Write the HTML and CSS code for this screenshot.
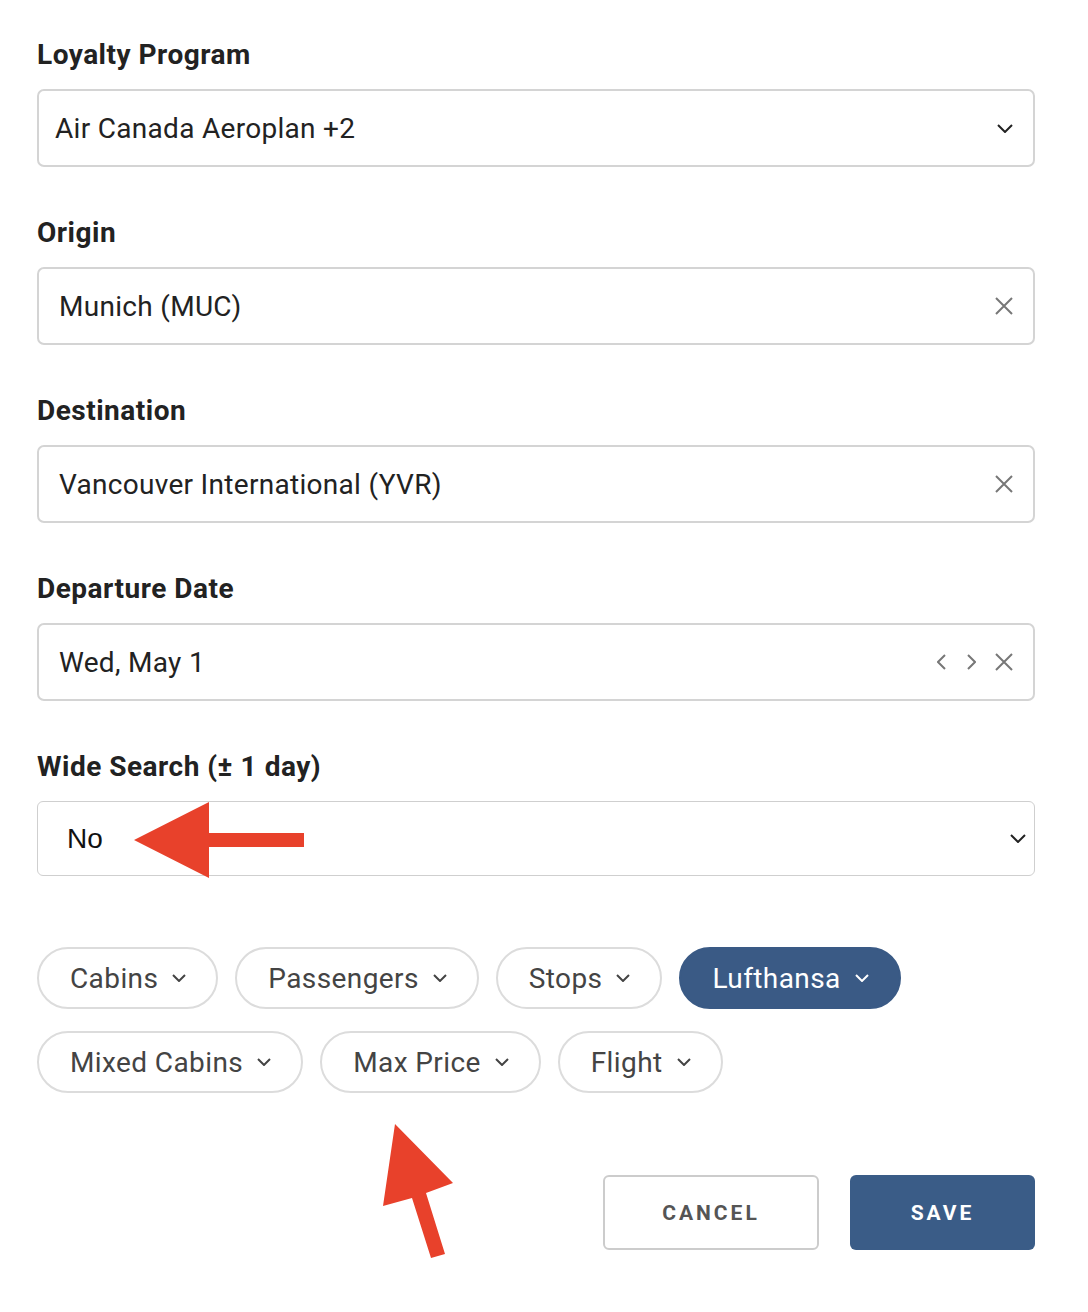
FILE: index.html
```html
<!DOCTYPE html>
<html lang="en">
<head>
<meta charset="utf-8">
<title>Search</title>
<link rel="stylesheet" href="styles.css">
</head>
<body>
<div class="form">
  <div class="field">
    <label class="label">Loyalty Program</label>
    <div class="input">
      <span class="value">Air Canada Aeroplan +2</span>
      <span class="icons">
        <svg class="chev-dark" width="16" height="9" viewBox="0 0 16 9"><polyline points="1,1 8,8 15,1" fill="none" stroke="#222" stroke-width="2"/></svg>
      </span>
    </div>
  </div>
  <div class="field">
    <label class="label">Origin</label>
    <div class="input">
      <span class="value v2">Munich (MUC)</span>
      <span class="icons">
        <svg width="18" height="18" viewBox="0 0 18 18"><path d="M1 1L17 17M17 1L1 17" stroke="#777" stroke-width="2"/></svg>
      </span>
    </div>
  </div>
  <div class="field">
    <label class="label">Destination</label>
    <div class="input">
      <span class="value v2">Vancouver International (YVR)</span>
      <span class="icons">
        <svg width="18" height="18" viewBox="0 0 18 18"><path d="M1 1L17 17M17 1L1 17" stroke="#777" stroke-width="2"/></svg>
      </span>
    </div>
  </div>
  <div class="field">
    <label class="label">Departure Date</label>
    <div class="input">
      <span class="value v2">Wed, May 1</span>
      <span class="icons date-icons">
        <svg width="10" height="16" viewBox="0 0 10 16"><polyline points="8,1 1,8 8,15" fill="none" stroke="#777" stroke-width="2"/></svg>
        <svg width="10" height="16" viewBox="0 0 10 16"><polyline points="2,1 9,8 2,15" fill="none" stroke="#777" stroke-width="2"/></svg>
        <svg width="18" height="18" viewBox="0 0 18 18"><path d="M1 1L17 17M17 1L1 17" stroke="#777" stroke-width="2"/></svg>
      </span>
    </div>
  </div>
  <div class="field">
    <label class="label">Wide Search (± 1 day)</label>
    <div class="select">
      <span class="select-value">No</span>
      <svg width="16" height="9" viewBox="0 0 16 9"><polyline points="1,1 8,8 15,1" fill="none" stroke="#222" stroke-width="2"/></svg>
      <svg class="arrow-left" width="174" height="78" viewBox="0 0 174 78"><polygon points="0,38 75,0 75,31 170,31 170,45 75,45 75,76" fill="#e8412b"/></svg>
    </div>
  </div>

  <div class="pills">
    <button class="pill">Cabins <svg width="14" height="8" viewBox="0 0 14 8"><polyline points="1,1 7,7 13,1" fill="none" stroke="currentColor" stroke-width="2"/></svg></button>
    <button class="pill">Passengers <svg width="14" height="8" viewBox="0 0 14 8"><polyline points="1,1 7,7 13,1" fill="none" stroke="currentColor" stroke-width="2"/></svg></button>
    <button class="pill">Stops <svg width="14" height="8" viewBox="0 0 14 8"><polyline points="1,1 7,7 13,1" fill="none" stroke="currentColor" stroke-width="2"/></svg></button>
    <button class="pill active">Lufthansa <svg width="14" height="8" viewBox="0 0 14 8"><polyline points="1,1 7,7 13,1" fill="none" stroke="currentColor" stroke-width="2"/></svg></button>
    <button class="pill">Mixed Cabins <svg width="14" height="8" viewBox="0 0 14 8"><polyline points="1,1 7,7 13,1" fill="none" stroke="currentColor" stroke-width="2"/></svg></button>
    <button class="pill">Max Price <svg width="14" height="8" viewBox="0 0 14 8"><polyline points="1,1 7,7 13,1" fill="none" stroke="currentColor" stroke-width="2"/></svg></button>
    <button class="pill">Flight <svg width="14" height="8" viewBox="0 0 14 8"><polyline points="1,1 7,7 13,1" fill="none" stroke="currentColor" stroke-width="2"/></svg></button>
  </div>

  <div class="actions">
    <svg class="arrow-up" width="80" height="140" viewBox="0 0 80 140"><polygon points="15,2 73,61 46,71 65,132 51,136 32,76 3,84" fill="#e8412b"/></svg>
    <button class="btn cancel">CANCEL</button>
    <button class="btn save">SAVE</button>
  </div>
</div>
</body>
</html>
```

FILE: styles.css
```css
* { box-sizing: border-box; }
html, body { margin: 0; padding: 0; background: #fff; }
body { font-family: Roboto, "Noto Sans", sans-serif; color: #222; }

.form {
  width: 1088px;
  padding: 37px 53px 40px 37px;
  display: flex;
  flex-direction: column;
}

.field {
  display: flex;
  flex-direction: column;
  gap: 16px;
  margin-bottom: 48px;
}
.field:nth-child(5) { margin-bottom: 0; }

.label {
  font-size: 28px;
  font-weight: 700;
  line-height: 36px;
  color: #222;
  letter-spacing: 0.5px;
}

.input {
  height: 78px;
  border: 2px solid #d4d4d4;
  border-radius: 7px;
  display: flex;
  align-items: center;
  justify-content: space-between;
  padding: 0 20px 0 16px;
}
.value {
  font-size: 28px;
  color: #222;
  letter-spacing: 0.3px;
}
.value.v2 { padding-left: 4px; }
.icons {
  display: flex;
  align-items: center;
  gap: 19px;
}

.select {
  position: relative;
  height: 75px;
  border: 1.5px solid #cfcfcf;
  border-radius: 6px;
  display: flex;
  align-items: center;
  justify-content: space-between;
  padding: 0 8px 0 29px;
}
.select-value {
  font-family: "Liberation Sans", Arial, sans-serif;
  font-size: 28px;
  color: #111;
}
.arrow-left {
  position: absolute;
  left: 96px;
  top: 0px;
}

.pills {
  display: flex;
  flex-wrap: wrap;
  gap: 22px 17px;
  margin-top: 71px;
  width: 900px;
}
.pill {
  height: 62px;
  border: 2px solid #dcdcdc;
  border-radius: 31px;
  background: #fff;
  color: #444;
  font-family: Roboto, "Noto Sans", sans-serif;
  font-size: 28px;
  letter-spacing: 0.4px;
  padding: 0 30px 0 31px;
  display: flex;
  align-items: center;
  gap: 14px;
}
.pill.active {
  background: #3a5a85;
  border-color: #3a5a85;
  color: #fff;
}

.actions {
  position: relative;
  display: flex;
  justify-content: flex-end;
  gap: 31px;
  margin-top: 82px;
}
.btn {
  height: 75px;
  border-radius: 6px;
  font-family: Roboto, "Noto Sans", sans-serif;
  font-size: 21px;
  font-weight: 700;
  letter-spacing: 3px;
}
.cancel {
  width: 216px;
  background: #fff;
  border: 2px solid #cccccc;
  color: #555;
}
.save {
  width: 185px;
  background: #3a5c87;
  border: none;
  color: #fff;
}
.arrow-up {
  position: absolute;
  left: 343px;
  top: -53px;
}
```
